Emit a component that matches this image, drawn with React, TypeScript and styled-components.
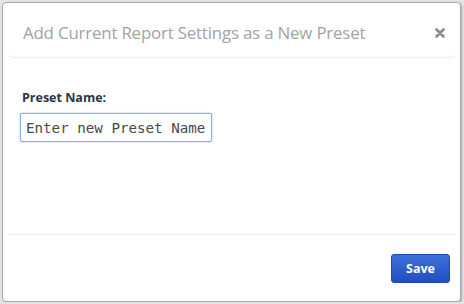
import React from 'react';
import styled, { createGlobalStyle } from 'styled-components';

const GlobalStyle = createGlobalStyle`
  html, body {
    margin: 0;
    padding: 0;
    background: #e4e4e4;
  }
  body {
    font-family: "Open Sans", "Noto Sans", sans-serif;
  }
`;

const Dialog = styled.div`
  box-sizing: border-box;
  width: 459px;
  height: 300px;
  margin: 2px 0 0 2px;
  background: #fff;
  border: 1px solid #a9a9a9;
  border-radius: 4px;
  box-shadow: 1px 1px 2px rgba(0, 0, 0, 0.25);
  display: flex;
  flex-direction: column;
`;

const Header = styled.div`
  box-sizing: border-box;
  height: 55px;
  margin: 0 4px;
  padding: 5px 11px 0 16px;
  border-bottom: 1px solid #ececec;
  border-radius: 0 0 6px 6px;
  display: flex;
  align-items: center;
  justify-content: space-between;
`;

const Title = styled.h3`
  margin: 0;
  font-family: "Open Sans", "Noto Sans", sans-serif;
  font-size: 16.9px;
  font-weight: 400;
  color: #a3a3a3;
  letter-spacing: -0.2px;
`;

const CloseButton = styled.button`
  border: none;
  background: none;
  padding: 0;
  width: 10px;
  height: 10px;
  display: flex;
  cursor: pointer;
`;

const Body = styled.div`
  flex: 1;
  padding: 31px 0 0 17px;
  display: flex;
  flex-direction: column;
  align-items: flex-start;
`;

const Label = styled.label`
  font-family: "Open Sans", "Noto Sans", sans-serif;
  font-size: 12.5px;
  font-weight: 700;
  color: #2a3646;
  margin: 0 0 7px 2px;
`;

const NameInput = styled.input`
  box-sizing: border-box;
  width: 192px;
  height: 29px;
  padding: 0 5px;
  border: 1px solid #8fb2ee;
  border-radius: 2px;
  box-shadow: 0 0 2px rgba(82, 136, 230, 0.6);
  font-family: "DejaVu Sans Mono", "Liberation Mono", monospace;
  font-size: 14.2px;
  color: #4a4a4a;
  outline: none;
`;

const Footer = styled.div`
  box-sizing: border-box;
  margin: 0 4px;
  height: 67px;
  border-top: 1px solid #ececec;
  padding: 0 6px 0 0;
  display: flex;
  align-items: center;
  justify-content: flex-end;
`;

const SaveButton = styled.button`
  box-sizing: border-box;
  width: 59px;
  height: 29px;
  border: 1px solid #1d47a8;
  border-radius: 3px;
  background: linear-gradient(#3f6fd9, #1f4fc2);
  color: #fff;
  font-family: "Open Sans", "Noto Sans", sans-serif;
  font-size: 12.5px;
  font-weight: 700;
  cursor: pointer;
`;

const App = () => {
  return (
    <>
      <GlobalStyle />
      <Dialog>
        <Header>
          <Title>Add Current Report Settings as a New Preset</Title>
          <CloseButton aria-label="Close">
            <svg width="10" height="10" viewBox="0 0 10 10">
              <path d="M1.5 1.5 L8.5 8.5 M8.5 1.5 L1.5 8.5" stroke="#8a8a8a" strokeWidth="2.6" strokeLinecap="round" />
            </svg>
          </CloseButton>
        </Header>
        <Body>
          <Label>Preset Name:</Label>
          <NameInput defaultValue="Enter new Preset Name" />
        </Body>
        <Footer>
          <SaveButton>Save</SaveButton>
        </Footer>
      </Dialog>
    </>
  );
};

export default App;
